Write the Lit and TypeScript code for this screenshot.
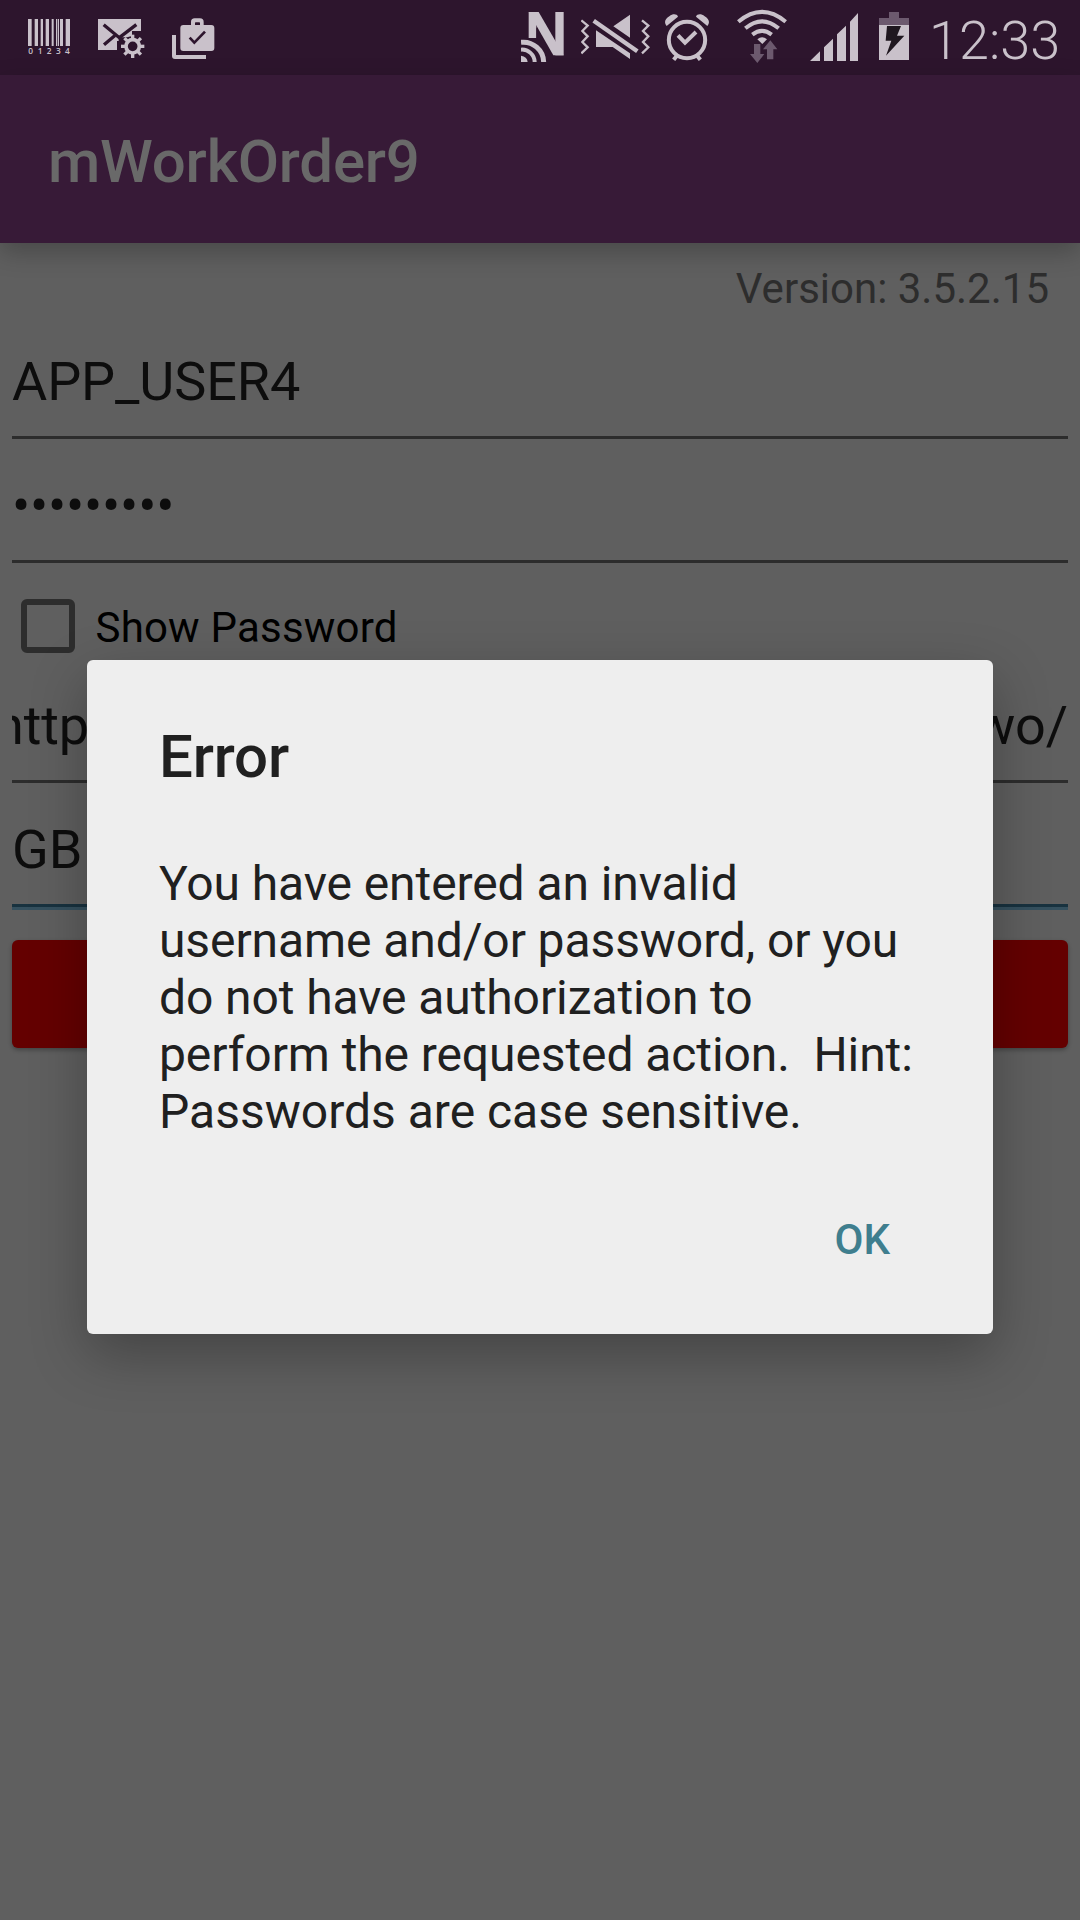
import { LitElement, html, css, svg } from "lit";
import { customElement, property } from "lit/decorators.js";

@customElement("status-bar")
class StatusBar extends LitElement {
  static styles = css`
    :host {
      display: flex;
      align-items: center;
      height: 75px;
      padding: 0 20px 0 28px;
      box-sizing: border-box;
      background: #2d152d;
      color: #c9c1ca;
      font-family: Roboto, sans-serif;
    }
    svg { display: block; height: 75px; fill: currentColor; flex: none; }
    .notices { display: flex; gap: 27px; flex: 1; }
    .system { display: flex; }
    .line { fill: none; stroke: currentColor; }
    .cut { fill: none; stroke: #2d152d; }
    .bg { fill: #2d152d; }
    .dim { fill: #6c596e; }
    .bolt { fill: #1f171f; }
    .digits { font: 600 25px "Open Sans", sans-serif; }
    .clock { font-size: 54px; font-weight: 350; line-height: 75px; margin-left: 19px; padding-top: 5px; width: 131px; box-sizing: border-box; white-space: nowrap; }
  `;
  render() {
    const bars = [[84, 11], [104, 10], [122, 7], [137, 10], [155, 6], [168, 9], [180, 9], [197, 13]];
    const digits = [[85, "0"], [113, "1"], [140, "2"], [168, "3"], [195, "4"]];
    const teeth = [0, 45, 90, 135, 180, 225, 270, 315];
    return html`
      <div class="notices">
        <svg width="43" viewBox="84 0 129 225">
          ${bars.map(([x, w]) => svg`<rect x=${x} y="57" width=${w} height="81"/>`)}
          <rect class="bg" x="172" y="57" width="2" height="81"/>
          ${digits.map(([x, t]) => svg`<text class="digits" x=${x} y="162">${t}</text>`)}
        </svg>
        <svg width="47" viewBox="294 0 141 225">
          <path d="M294 57H423V93H396V112H356V123H351V150H294Z"/>
          <path class="cut" stroke-width="10" d="M311 74L358 113L409 74M312 134L344 107"/>
          <circle class="bg" cx="398" cy="139" r="31"/>
          <path class="bg" d="M396 93H423V104H396Z"/>
          ${teeth.map((a) => svg`<rect x="393" y="104" width="10" height="16" transform="rotate(${a} 398 139)"/>`)}
          <circle class="line" cx="398" cy="139" r="20" stroke-width="11"/>
        </svg>
        <svg width="43" viewBox="516 0 129 225">
          <path fill-rule="evenodd" d="M573 75V66Q573 55 584 55H600Q611 55 611 66V75H634Q643 75 643 84V144Q643 153 634 153H550Q541 153 541 144V84Q541 75 550 75ZM585 75H600V69Q600 67 598 67H587Q585 67 585 69Z"/>
          <path class="cut" stroke-width="8" d="M569 113L583 128L615 95"/>
          <path d="M516 105H528V165H618V177H525Q516 177 516 168Z"/>
        </svg>
      </div>
      <div class="system">
        <svg width="60" viewBox="63 0 180 225">
          <rect x="86" y="36" width="23" height="78"/>
          <rect x="166" y="36" width="25" height="130"/>
          <path d="M86 36H116L191 166H160Z"/>
          <path class="bg" d="M109 82L138 133V150L109 114Z"/>
          <path class="line" stroke-width="15" d="M63 127A61 61 0 0 1 131 186"/>
          <path class="line" stroke-width="12" d="M63 149A38 38 0 0 1 104 186"/>
          <path d="M63 167Q81 169 83 186H63Z"/>
        </svg>
        <svg width="84" viewBox="243 0 252 225">
          <path class="line" stroke-width="7" d="M244 61L263 77L247 93L263 109L247 126L263 142L244 160M426 61L445 77L429 93L445 109L429 126L445 142L426 160"/>
          <path d="M390 44V113L340 79ZM288 91L390 160V177L338 141H288Z"/>
          <path class="line" stroke-width="13" d="M281 62L412 154"/>
        </svg>
        <svg width="72" viewBox="495 0 216 225">
          <circle class="line" cx="561" cy="120" r="54.5" stroke-width="12"/>
          <path class="line" stroke-width="12" d="M534 106L555 128L588 96"/>
          <path class="line" stroke-width="12" d="M530 168L521 179M592 168L601 179"/>
          <path d="M500 78C491 67 495 57 508 49C519 40 531 42 534 50ZM622 78C631 67 627 57 614 49C603 40 591 42 588 50Z"/>
        </svg>
        <svg width="72" viewBox="711 0 216 225">
          <path class="line" stroke-width="12" d="M715 65Q786 6 857 65M736 85Q786 43 836 85M757 104Q786 81 815 104"/>
          <path d="M772 118Q786 105 801 118L787 132Z"/>
          <path class="dim" d="M762 132H781V162H793L772 189L750 162H762ZM811 121L832 148H820V178H801V148H789Z"/>
        </svg>
        <svg width="68" viewBox="87 0 204 225">
          <path d="M90 183L120 154V183ZM132 142L159 116V183H132ZM171 103L198 77V183H171ZM210 65L234 39V183H210Z"/>
        </svg>
        <svg width="33" viewBox="291 0 99 225">
          <path class="dim" d="M327 36H357V54H387V75H297V54H327Z"/>
          <rect x="297" y="75" width="90" height="105"/>
          <path class="bolt" d="M321 78H363L351 107H373L318 167L334 122H317Z"/>
        </svg>
      </div>
      <div class="clock">12:33</div>
    `;
  }
}

@customElement("text-field")
class TextField extends LitElement {
  @property({ type: Boolean, reflect: true }) focused = false;
  static styles = css`
    :host {
      display: flex;
      flex-direction: column;
      justify-content: flex-end;
      margin: 0 12px;
      border-bottom: 3px solid #2c2c2c;
    }
    :host([focused]) { border-bottom-color: #18323f; box-shadow: 0 3px #35505e; }
    .value {
      display: flex;
      justify-content: space-between;
      overflow: hidden;
      height: 64px;
      line-height: 64px;
      font-size: 54px;
      letter-spacing: -0.1px;
      color: #0d0d0d;
      white-space: nowrap;
      padding-bottom: 22px;
    }
  `;
  render() {
    return html`<div class="value"><slot></slot></div>`;
  }
}

@customElement("error-dialog")
class ErrorDialog extends LitElement {
  static styles = css`
    :host {
      display: block;
      box-sizing: border-box;
      width: 906px;
      height: 674px;
      padding: 62px 72px 0;
      border-radius: 6px;
      background: #eee;
      box-shadow: 0 20px 56px rgba(0, 0, 0, 0.29);
      color: #202020;
    }
    .title { margin: 0; font-size: 60px; font-weight: 500; line-height: 70px; letter-spacing: -0.15px; }
    .message { margin: 63px 0 0; font-size: 48px; line-height: 57px; }
    .line { display: block; white-space: pre; letter-spacing: -0.09px; }
    .line:last-child { letter-spacing: normal; }
    .actions { display: flex; justify-content: flex-end; margin-top: 75px; padding-right: 31px; }
    .ok { padding: 0; border: 0; background: none; color: #3f7e8e; font: 500 42px/50px Roboto, sans-serif; }
  `;
  render() {
    const message = [
      "You have entered an invalid",
      "username and/or password, or you",
      "do not have authorization to",
      "perform the requested action.  Hint:",
      "Passwords are case sensitive.",
    ];
    return html`
      <h2 class="title">Error</h2>
      <p class="message">${message.map((t) => html`<span class="line">${t}</span>`)}</p>
      <div class="actions"><button class="ok">OK</button></div>
    `;
  }
}

@customElement("app-root")
class AppRoot extends LitElement {
  static styles = css`
    :host {
      display: block;
      position: relative;
      width: 1080px;
      height: 1920px;
      overflow: hidden;
      background: #5f5f5f;
      font-family: Roboto, sans-serif;
    }
    .appbar {
      display: flex;
      align-items: center;
      height: 168px;
      box-sizing: border-box;
      padding: 4px 48px 0;
      background: #371a37;
      color: #696969;
      font-size: 60px;
      font-weight: 500;
      letter-spacing: -0.2px;
      box-shadow: 0 9px 24px rgba(0, 0, 0, 0.24);
    }
    .version { padding: 21px 31px 0; height: 49px; line-height: 49px; font-size: 42px; color: #2d2d2d; text-align: right; }
    .user { height: 123px; }
    .password { height: 121px; }
    .dots { letter-spacing: -0.2px; }
    .server { height: 91px; }
    .site { height: 121px; }
    .check { display: flex; align-items: center; height: 126px; padding: 0 21px; gap: 20.5px; font-size: 42px; color: #000; }
    .box { width: 54px; height: 54px; box-sizing: border-box; border: 6px solid #2d2d2d; border-radius: 6px; }
    .check-label { padding-top: 3px; letter-spacing: 0.2px; }
    .clipped { margin-left: -18px; }
    .submit {
      margin: 33px 12px 0;
      height: 108px;
      border-radius: 6px;
      background: #640000;
      box-shadow: 0 2px 4px rgba(0, 0, 0, 0.3);
    }
    .overlay { position: absolute; inset: 75px 0 0; display: flex; align-items: center; justify-content: center; padding-bottom: 1px; }
  `;
  render() {
    return html`
      <status-bar></status-bar>
      <header class="appbar">mWorkOrder9</header>
      <main>
        <div class="version">Version: 3.5.2.15</div>
        <text-field class="user">APP_USER4</text-field>
        <text-field class="password"><span class="dots">•••••••••</span></text-field>
        <div class="check"><span class="box"></span><span class="check-label">Show Password</span></div>
        <text-field class="server"><span class="clipped">http</span><span>wo/</span></text-field>
        <text-field class="site" focused>GB</text-field>
        <div class="submit"></div>
      </main>
      <div class="overlay"><error-dialog></error-dialog></div>
    `;
  }
}
